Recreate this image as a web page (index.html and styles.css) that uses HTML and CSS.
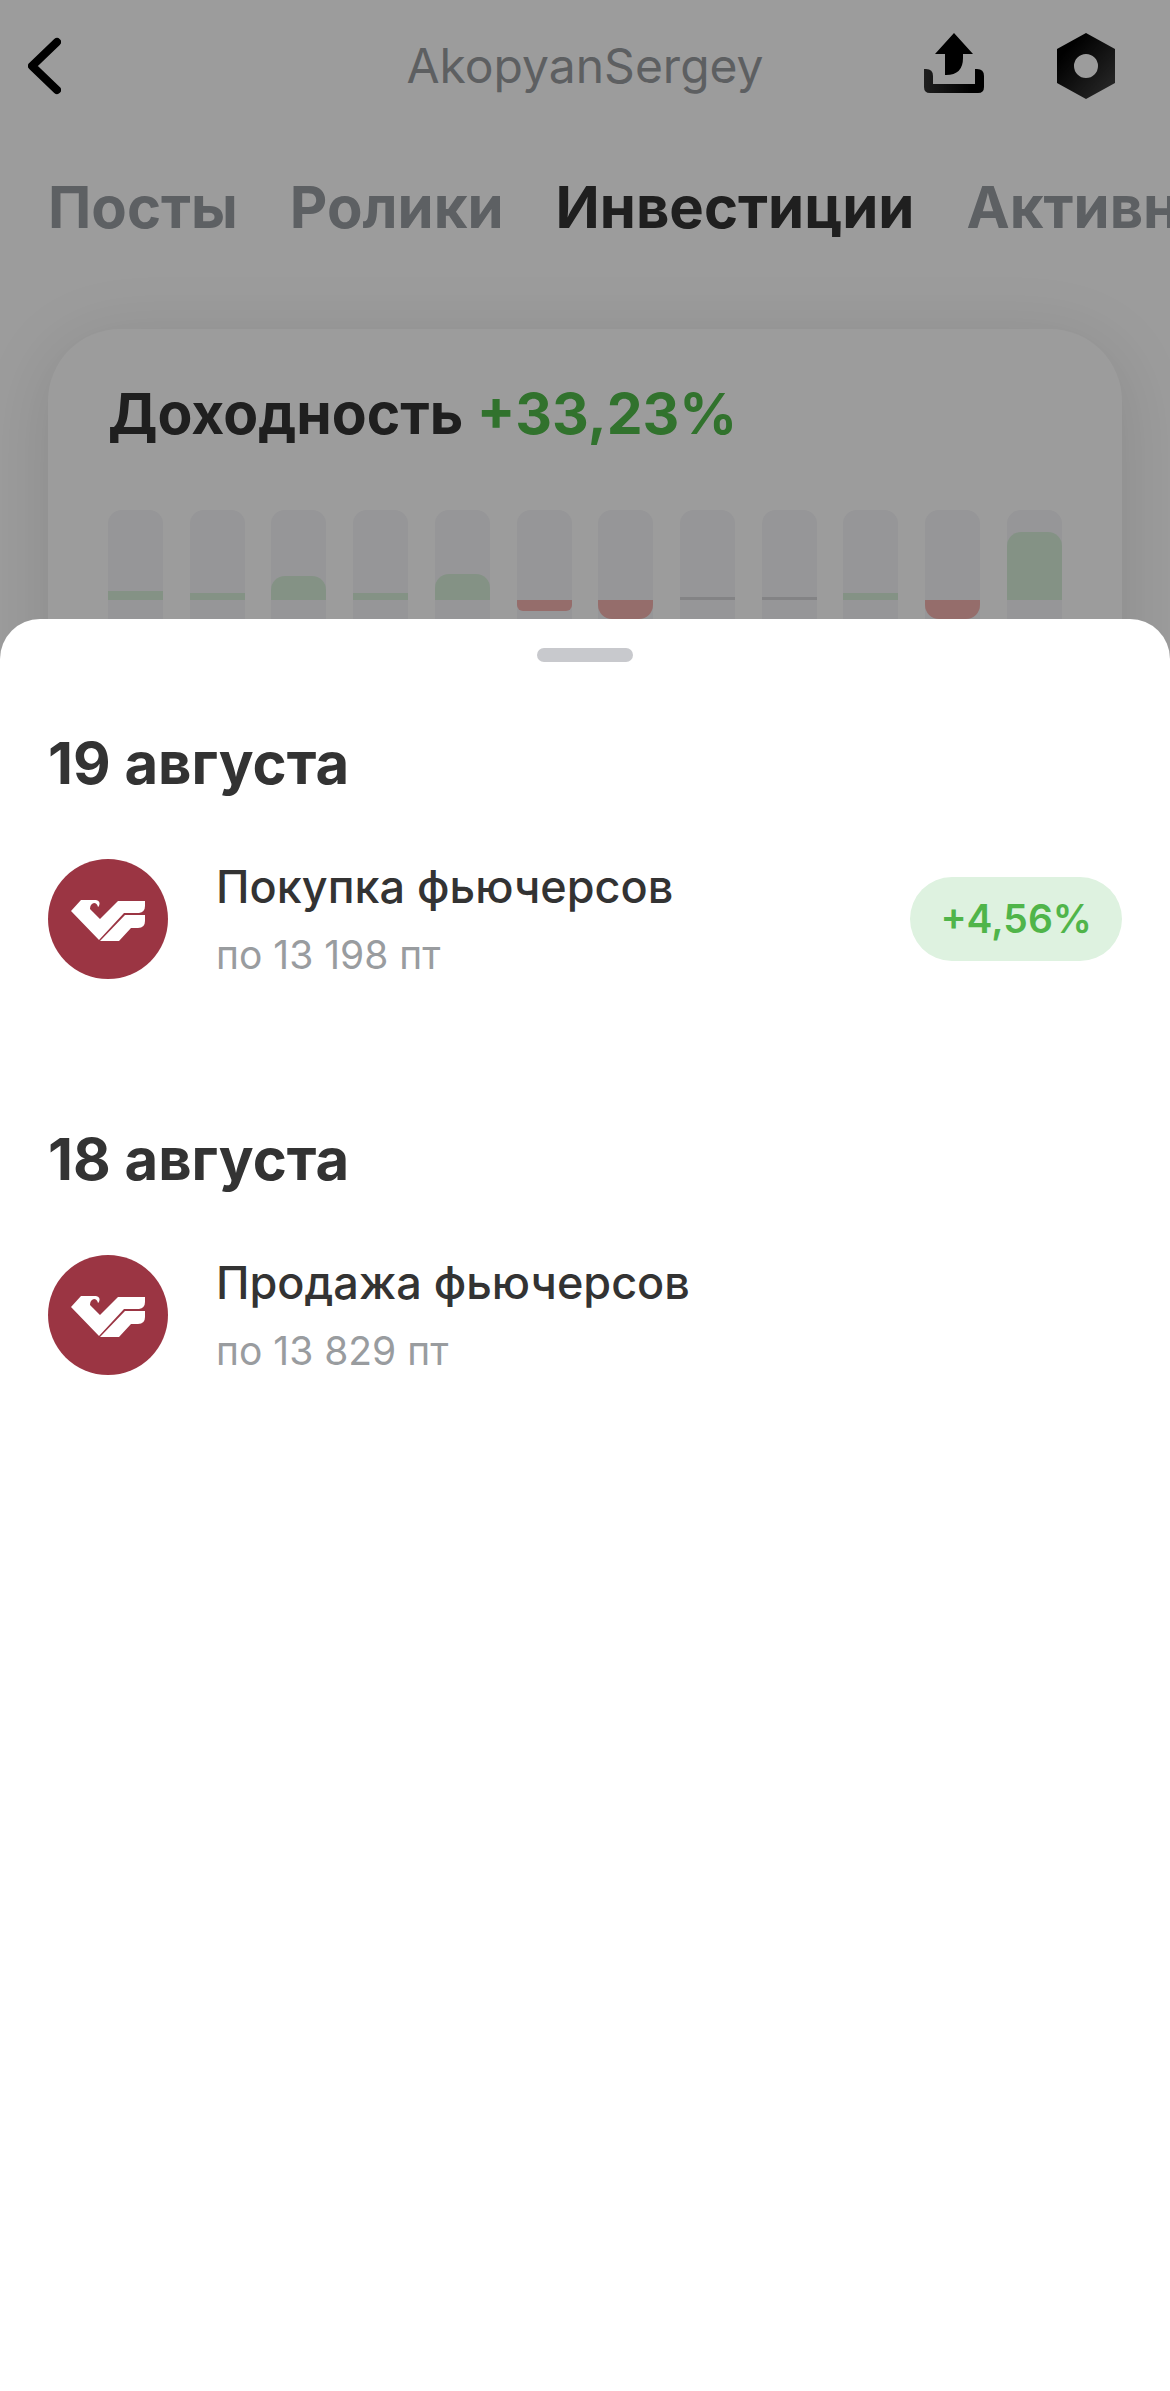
FILE: index.html
```html
<!DOCTYPE html>
<html lang="ru">
<head>
	<meta charset="UTF-8">
	<meta name="viewport" content="width=device-width, initial-scale=1">
	<title>AkopyanSergey</title>
	<link rel="stylesheet" href="styles.css">
</head>
<body>
	<main class="profile">
		<header class="topbar">
			<button class="back" aria-label="Назад">
				<svg width="33" height="66" viewBox="0 0 33 66"><path d="M29 9 4 33 29 57" fill="none" stroke="#000" stroke-width="8" stroke-linecap="round" stroke-linejoin="round"/></svg>
			</button>
			<h1>AkopyanSergey</h1>
			<div class="actions">
				<button aria-label="Поделиться">
					<svg width="60" height="66" viewBox="0 0 60 66">
						<defs>
							<linearGradient id="tray" x1="0" x2="1"><stop offset="0" stop-color="#333"/><stop offset="0.8" stop-color="#000"/></linearGradient>
						</defs>
						<path d="M30 0 49 21H39V25Q39 42 22 42H21V21H11Z"/>
						<path d="M0 36H2Q9 36 9 43V51H51V36H53Q60 36 60 43V54Q60 60 54 60H6Q0 60 0 54Z" fill="url(#tray)"/>
					</svg>
				</button>
				<button aria-label="Настройки">
					<svg width="58" height="66" viewBox="0 0 58 66">
						<defs>
							<linearGradient id="nut" x1="0" y1="0" x2="1" y2="1"><stop offset="0.2" stop-color="#000"/><stop offset="1" stop-color="#484848"/></linearGradient>
						</defs>
						<path d="M29 0 58 16V50L29 66 0 50V16ZM29 21a12 12 0 1 0 0 24 12 12 0 1 0 0-24Z" fill="url(#nut)" fill-rule="evenodd"/>
					</svg>
				</button>
			</div>
		</header>
		<nav class="tabs">
			<a href="#posts">Посты</a>
			<a href="#clips">Ролики</a>
			<a href="#invest" class="active">Инвестиции</a>
			<a href="#activity">Активность</a>
		</nav>
		<section class="card">
			<h2>Доходность <span>+33,23%</span></h2>
			<div class="chart">
				<div class="bar"><i class="up flat" style="height: 9px"></i></div>
				<div class="bar"><i class="up flat" style="height: 7px"></i></div>
				<div class="bar"><i class="up" style="height: 24px"></i></div>
				<div class="bar"><i class="up flat" style="height: 7px"></i></div>
				<div class="bar"><i class="up" style="height: 26px"></i></div>
				<div class="bar"><i class="down small" style="height: 11px"></i></div>
				<div class="bar"><i class="down" style="height: 19px"></i></div>
				<div class="bar"><i class="zero"></i></div>
				<div class="bar"><i class="zero"></i></div>
				<div class="bar"><i class="up flat" style="height: 7px"></i></div>
				<div class="bar"><i class="down" style="height: 19px"></i></div>
				<div class="bar"><i class="up" style="height: 68px"></i></div>
			</div>
		</section>
	</main>

	<div class="overlay"></div>

	<!-- logo is shared by all deals -->
	<svg class="sprite" width="0" height="0">
		<symbol id="logo" viewBox="0 0 120 120">
			<circle cx="60" cy="60" r="60" fill="#9b3543"/>
			<path fill="#fff" d="M23 52 33 41H48Q53 42 51 47L50 48Q49 44 46 44 42 45 42 50L52 60 70 42H97V47Q97 53 91 54H76L51 81Z"/>
			<path fill="#fff" d="M52 82 77 56H97V62Q97 69 90 69H83L71 82Z"/>
		</symbol>
	</svg>

	<section class="sheet">
		<div class="handle"></div>
		<div class="day">
			<h2>19 августа</h2>
			<div class="deal">
				<svg class="logo"><use href="#logo"/></svg>
				<div class="info">
					<h3>Покупка фьючерсов</h3>
					<p>по 13 198 пт</p>
				</div>
				<span class="profit">+4,56%</span>
			</div>
		</div>
		<div class="day">
			<h2>18 августа</h2>
			<div class="deal">
				<svg class="logo"><use href="#logo"/></svg>
				<div class="info">
					<h3>Продажа фьючерсов</h3>
					<p>по 13 829 пт</p>
				</div>
			</div>
		</div>
	</section>
</body>
</html>
```
FILE: styles.css
```css
* {
	box-sizing: border-box;
}
body {
	background-color: #fff;
	color: #333;
	font-family: Inter, "Liberation Sans", sans-serif;
	margin: 0;
	min-height: 100vh;
	overflow-x: hidden;
}
h1, h2, h3, p {
	margin: 0;
}
button {
	background: none;
	border: none;
	cursor: pointer;
	padding: 0;
}
svg {
	display: block;
}
/*profile*/
.profile {
	overflow: hidden;
}
.topbar {
	align-items: center;
	display: grid;
	grid-template-columns: 1fr auto 1fr;
	height: 132px;
	padding: 0 28px;
}
.topbar .back {
	justify-self: start;
}
.topbar h1 {
	color: #999c9f;
	font-size: 48px;
	font-weight: 400;
	line-height: 60px;
}
.topbar .actions {
	display: flex;
	gap: 73px;
	justify-content: flex-end;
	padding-right: 27px;
}
.tabs {
	display: flex;
	gap: 52px;
	margin-top: 40px;
	padding-left: 48px;
}
.tabs a {
	color: #999da2;
	font-size: 58px;
	font-weight: 700;
	line-height: 70px;
	text-decoration: none;
}
.tabs a.active {
	color: #333;
}
.card {
	border-radius: 72px;
	box-shadow: 0 12px 72px rgba(0,0,0,.12);
	margin: 87px 48px 0;
	padding: 50px 60px 60px;
}
.card h2 {
	font-size: 57px;
	font-weight: 700;
	line-height: 70px;
}
.card h2 span {
	color: #50bb4a;
}
.chart {
	display: flex;
	justify-content: space-between;
	margin-top: 61px;
}
.bar {
	background-color: #f5f5f8;
	border-radius: 14px;
	display: grid;
	grid-template-rows: 90px 90px;
	width: 55px;
}
.bar .up {
	align-self: end;
	background-color: #d8efda;
	border-radius: 14px 14px 0 0;
}
.bar .flat {
	border-radius: 0;
}
.bar .down {
	background-color: #f3b3b0;
	border-radius: 0 0 14px 14px;
	grid-row: 2;
}
.bar .small {
	border-radius: 0 0 6px 6px;
}
.bar .zero {
	align-self: end;
	background-color: #d6d6da;
	height: 3px;
}
.overlay {
	background-color: rgba(0,0,0,.39);
	inset: 0;
	position: fixed;
}
.sprite {
	position: absolute;
}
/*bottom sheet*/
.sheet {
	background-color: #fff;
	border-radius: 40px 40px 0 0;
	bottom: 0;
	left: 0;
	padding: 29px 48px;
	position: fixed;
	right: 0;
	top: 619px;
}
.handle {
	background-color: #c8c9cd;
	border-radius: 8px;
	height: 14px;
	margin: 0 auto;
	width: 96px;
}
.day {
	margin-top: 66px;
}
.day + .day {
	margin-top: 141px;
}
.day h2 {
	font-size: 58px;
	font-weight: 700;
	line-height: 70px;
}
.deal {
	align-items: flex-start;
	display: flex;
	gap: 48px;
	margin-top: 61px;
}
.logo {
	flex: none;
	height: 120px;
	width: 120px;
}
.info {
	flex: 1;
}
.info h3 {
	font-size: 45px;
	font-weight: 500;
	line-height: 56px;
}
.info p {
	color: #999c9f;
	font-size: 39px;
	line-height: 56px;
	margin-top: 12px;
}
.profit {
	background-color: #def2e0;
	border-radius: 42px;
	color: #50b54a;
	font-size: 39px;
	font-weight: 600;
	line-height: 84px;
	margin-top: 18px;
	padding: 0 30px;
}
```
